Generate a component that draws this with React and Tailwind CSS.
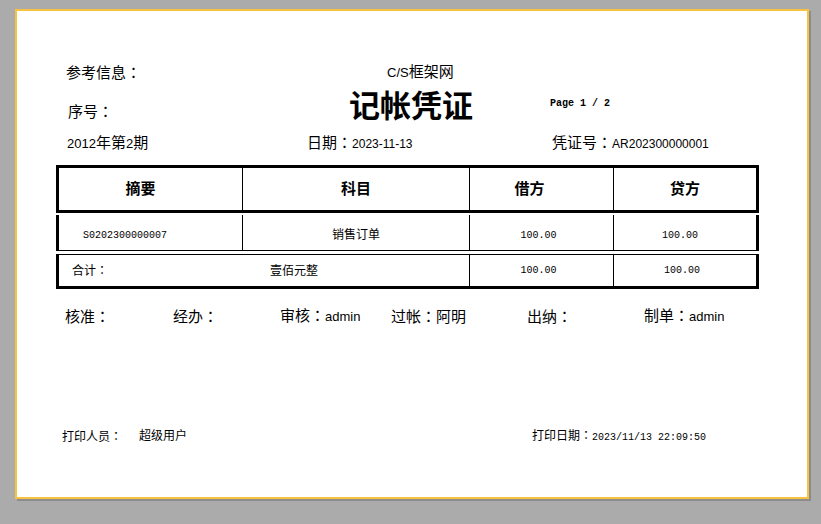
const mono = "font-['Liberation_Mono','Noto_Sans_CJK_SC',monospace]";

// 全角冒号居中显示
function Colon() {
  return <span className="font-['Noto_Sans_CJK_TC',sans-serif]">：</span>;
}

export default function App() {
  return (
    <div className="h-[524px] w-[821px] bg-[#ababab] pl-[15px] pt-[9px] font-['Liberation_Sans','Noto_Sans_CJK_SC',sans-serif] text-black">
      {/* Page */}
      <div className="h-[490px] w-[794px] border-2 border-[#f8c23e] bg-white shadow-[2px_2px_0_#8c8c8c]">
        {/* 参考信息 / 标题 */}
        <div className="mt-[53px] flex h-4 items-center text-[15px] leading-4">
          <span className="ml-[49px] w-[321px]">
            参考信息<Colon />
          </span>
          <span>
            <span className="text-[13px]">C/S</span>框架网
          </span>
        </div>

        <div className="mt-3 flex h-[30px] items-start">
          <span className="ml-[51px] mt-[11px] w-[281px] text-[15px] leading-4">
            序号<Colon />
          </span>
          <span className="w-[201px] text-[31px] font-semibold leading-[30px]">记帐凭证</span>
          <span className={`${mono} mt-[6px] text-[10px] font-bold leading-3`}>Page 1 / 2</span>
        </div>

        <div className="mt-[13px] flex h-4 items-center text-[15px] leading-4">
          <span className="ml-[50px] w-[240px]">
            <span className="text-[13px]">2012</span>年第<span className="text-[13px]">2</span>期
          </span>
          <span className="w-[245px]">
            日期<Colon />
            <span className="text-[12px]">2023-11-13</span>
          </span>
          <span>
            凭证号<Colon />
            <span className="text-[12px]">AR202300000001</span>
          </span>
        </div>

        {/* 表格 */}
        <div className="ml-[39px] mt-[14px] w-[703px]">
          <div className="grid h-[48px] grid-cols-[183px_227px_144px_1fr] border-[3px] border-black text-[15px] font-bold">
            <div className="flex items-center justify-center pr-5">摘要</div>
            <div className="flex items-center justify-center border-l border-black">科目</div>
            <div className="flex items-center justify-center border-l border-black pr-6">借方</div>
            <div className="flex items-center justify-center border-l border-black">贷方</div>
          </div>

          <div className="mt-[2px] grid h-[36px] grid-cols-[183px_227px_144px_1fr] border-b border-l-[3px] border-r-[3px] border-black">
            <div className={`${mono} flex items-center pl-6 pt-[6px] text-[10px]`}>S0202300000007</div>
            <div className="flex items-center justify-center border-l border-black pt-[5px] text-[12px]">销售订单</div>
            <div className={`${mono} flex items-center justify-center border-l border-black pr-[6px] pt-[6px] text-[10px]`}>100.00</div>
            <div className={`${mono} flex items-center justify-center border-l border-black pr-[10px] pt-[6px] text-[10px]`}>100.00</div>
          </div>

          <div className="mt-[3px] grid h-[35px] grid-cols-[410px_144px_1fr] border-x-[3px] border-b-[3px] border-t border-black">
            <div className="flex items-center pl-[13px] text-[12px]">
              <span className="w-[198px]">
                合计<Colon />
              </span>
              <span>壹佰元整</span>
            </div>
            <div className={`${mono} flex items-center justify-center border-l border-black pr-[6px] text-[10px]`}>100.00</div>
            <div className={`${mono} flex items-center justify-center border-l border-black pr-[6px] text-[10px]`}>100.00</div>
          </div>
        </div>

        {/* 签字 */}
        <div className="mt-[19px] flex h-4 items-center text-[15px] leading-4">
          <span className="ml-12 w-[108px]">
            核准<Colon />
          </span>
          <span className="w-[107px]">
            经办<Colon />
          </span>
          <span className="w-[111px]">
            审核<Colon />
            <span className="text-[13px]">admin</span>
          </span>
          <span className="w-[136px]">
            过帐<Colon />阿明
          </span>
          <span className="w-[117px]">
            出纳<Colon />
          </span>
          <span>
            制单<Colon />
            <span className="text-[13px]">admin</span>
          </span>
        </div>

        {/* 打印信息 */}
        <div className="mt-[105px] flex h-[14px] items-center text-[12px] leading-[14px]">
          <span className="ml-[45px] w-[77px]">
            打印人员<Colon />
          </span>
          <span className="w-[393px]">超级用户</span>
          <span>
            打印日期<Colon />
            <span className={`${mono} text-[10px]`}>2023/11/13 22:09:50</span>
          </span>
        </div>
      </div>
    </div>
  );
}
